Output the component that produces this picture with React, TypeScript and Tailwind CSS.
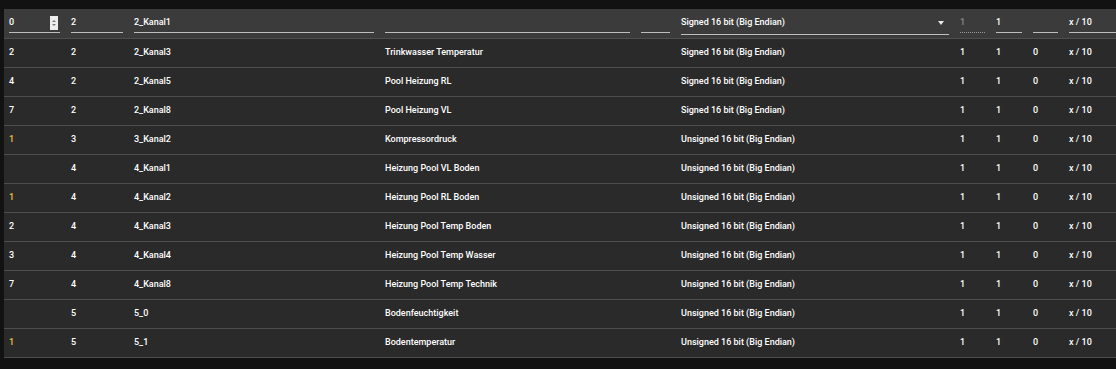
import React from "react";

type Row = {
  a: string;
  b: string;
  name: string;
  desc: string;
  type: string;
};

const rows: Row[] = [
  { a: "2", b: "2", name: "2_Kanal3", desc: "Trinkwasser Temperatur", type: "Signed 16 bit (Big Endian)" },
  { a: "4", b: "2", name: "2_Kanal5", desc: "Pool Heizung RL", type: "Signed 16 bit (Big Endian)" },
  { a: "7", b: "2", name: "2_Kanal8", desc: "Pool Heizung VL", type: "Signed 16 bit (Big Endian)" },
  { a: "1", b: "3", name: "3_Kanal2", desc: "Kompressordruck", type: "Unsigned 16 bit (Big Endian)" },
  { a: "", b: "4", name: "4_Kanal1", desc: "Heizung Pool VL Boden", type: "Unsigned 16 bit (Big Endian)" },
  { a: "1", b: "4", name: "4_Kanal2", desc: "Heizung Pool RL Boden", type: "Unsigned 16 bit (Big Endian)" },
  { a: "2", b: "4", name: "4_Kanal3", desc: "Heizung Pool Temp Boden", type: "Unsigned 16 bit (Big Endian)" },
  { a: "3", b: "4", name: "4_Kanal4", desc: "Heizung Pool Temp Wasser", type: "Unsigned 16 bit (Big Endian)" },
  { a: "7", b: "4", name: "4_Kanal8", desc: "Heizung Pool Temp Technik", type: "Unsigned 16 bit (Big Endian)" },
  { a: "", b: "5", name: "5_0", desc: "Bodenfeuchtigkeit", type: "Unsigned 16 bit (Big Endian)" },
  { a: "1", b: "5", name: "5_1", desc: "Bodentemperatur", type: "Unsigned 16 bit (Big Endian)" },
];

const grid =
  "grid grid-cols-[62px_63px_251px_256px_40px_279px_36px_37px_36px_60px]";

function Input({ children, className = "" }: { children?: React.ReactNode; className?: string }) {
  return (
    <div className={`h-[19px] border-b border-[#bdbdbd] flex items-center ${className}`}>
      {children}
    </div>
  );
}

function Cell({ children, className = "" }: { children?: React.ReactNode; className?: string }) {
  return <div className={`pl-[5px] pr-[6px] pt-[5px] ${className}`}>{children}</div>;
}

export default function App() {
  return (
    <div
      className="w-full h-[369px] bg-[#121212] overflow-hidden pt-[9px] pl-[4px] text-[9px] font-medium text-white"
      style={{ fontFamily: "Roboto, 'Liberation Sans', Arial, sans-serif" }}
    >
      <div className="w-[1120px]">
        {/* edit row */}
        <div className={`${grid} h-[30px] bg-[#3b3b3b] border-b border-[#4e4e4e]`}>
          <Cell>
            <Input>
              <span>0</span>
              <span className="ml-auto mr-[2px] w-[8px] h-[14px] bg-[#ededed] flex flex-col items-center justify-center gap-[2px]">
                <span className="w-0 h-0 border-l-[2px] border-r-[2px] border-b-[2px] border-l-transparent border-r-transparent border-b-[#777]" />
                <span className="w-0 h-0 border-l-[2px] border-r-[2px] border-t-[2px] border-l-transparent border-r-transparent border-t-[#777]" />
              </span>
            </Input>
          </Cell>
          <Cell>
            <Input>2</Input>
          </Cell>
          <Cell>
            <Input>2_Kanal1</Input>
          </Cell>
          <Cell>
            <Input />
          </Cell>
          <Cell>
            <Input />
          </Cell>
          <Cell>
            <div className="h-[21px] border-b border-[#bdbdbd] flex items-start">
              <div className="h-[18px] flex items-center w-full">
                <span>Signed 16 bit (Big Endian)</span>
                <span className="ml-auto mr-[5px] w-0 h-0 border-l-[3.5px] border-r-[3.5px] border-t-[4px] border-l-transparent border-r-transparent border-t-[#e8e8e8]" />
              </div>
            </div>
          </Cell>
          <Cell>
            <div className="h-[19px] border-b border-dotted border-[#9a9a9a] flex items-center text-[#8a8a8a]">
              1
            </div>
          </Cell>
          <Cell className="pr-[5px]">
            <Input>1</Input>
          </Cell>
          <Cell>
            <Input />
          </Cell>
          <Cell>
            <Input>x / 10</Input>
          </Cell>
        </div>

        {rows.map((r, i) => (
          <div
            key={i}
            className={`${grid} h-[29px] bg-[#2a2a2a] border-b border-[#4e4e4e] items-center`}
          >
            <div className={`pl-[5px] ${r.a === "1" ? "text-[#eec23a]" : ""}`}>{r.a}</div>
            <div className="pl-[5px]">{r.b}</div>
            <div className="pl-[5px]">{r.name}</div>
            <div className="pl-[5px]">{r.desc}</div>
            <div className="pl-[5px]"></div>
            <div className="pl-[5px]">{r.type}</div>
            <div className="pl-[5px]">1</div>
            <div className="pl-[5px]">1</div>
            <div className="pl-[5px]">0</div>
            <div className="pl-[5px]">x / 10</div>
          </div>
        ))}
      </div>
    </div>
  );
}
